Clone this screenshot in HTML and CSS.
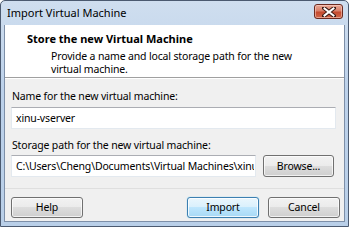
FILE: index.html
```html
<!DOCTYPE html>
<html>
<head>
<meta charset="utf-8">
<link rel="stylesheet" href="styles.css">
</head>
<body>
<div class="window">
  <div class="titlebar">
    <span class="title">Import Virtual Machine</span>
    <div class="close">
      <svg width="14" height="10" viewBox="0 0 14 10">
        <path d="M2 1 L12 9 M12 1 L2 9" stroke="#3a1a14" stroke-width="4" stroke-linecap="square"/>
        <path d="M2.5 1.5 L11.5 8.5 M11.5 1.5 L2.5 8.5" stroke="#ffffff" stroke-width="2" stroke-linecap="square"/>
      </svg>
    </div>
  </div>
  <div class="client">
    <div class="header">
      <div class="h-title">Store the new Virtual Machine</div>
      <div class="h-desc">Provide a name and local storage path for the new<br>virtual machine.</div>
    </div>
    <div class="body">
      <div class="label first">Name for the new virtual machine:</div>
      <div class="input name">xinu-vserver</div>
      <div class="label second">Storage path for the new virtual machine:</div>
      <div class="row">
        <div class="input path"><span class="path-text">C:\Users\Cheng\Documents\Virtual Machines\xinu-vserver</span></div>
        <div class="btn browse">Browse...</div>
      </div>
    </div>
    <div class="footer">
      <div class="btn help">Help</div>
      <div class="spacer"></div>
      <div class="btn default">Import</div>
      <div class="btn cancel">Cancel</div>
    </div>
  </div>
</div>
</body>
</html>
```

FILE: styles.css
```css
html, body {
  margin: 0;
  padding: 0;
  width: 349px;
  height: 227px;
  overflow: hidden;
  background: #ffffff;
}
.window {
  box-sizing: border-box;
  width: 349px;
  height: 227px;
  border: 1px solid #4b5a70;
  border-radius: 5px 5px 0 0;
  background: linear-gradient(to bottom, #cfdeef 0%, #bcd1ea 40%, #b9cfe8 100%);
  display: flex;
  flex-direction: column;
  font-family: "Noto Sans", "Open Sans", sans-serif;
  font-size: 10.5px;
  letter-spacing: -0.15px;
  color: #000;
}
.titlebar {
  height: 24px;
  display: flex;
  align-items: center;
  position: relative;
  padding-left: 6px;
}
.title {
  font-size: 11px;
  letter-spacing: 0;
  color: #000;
  line-height: 16px;
  margin-top: -1px;
}
.close {
  position: absolute;
  right: 5px;
  top: 3px;
  width: 29px;
  height: 15px;
  box-sizing: border-box;
  border: 1px solid #6c2a20;
  border-radius: 3px;
  background: linear-gradient(to bottom, #e9a896 0%, #d9806a 45%, #c54a2f 55%, #d0674a 100%);
  box-shadow: inset 0 0 0 1px rgba(255, 220, 210, 0.5);
  display: flex;
  align-items: center;
  justify-content: center;
}
.client {
  flex: 1;
  margin: 0 3px 4px 3px;
  border: 1px solid #7d8fa8;
  border-top: none;
  background: #f0f0f0;
  display: flex;
  flex-direction: column;
}
.header {
  background: #ffffff;
  height: 53px;
  box-sizing: border-box;
  padding: 6px 0 0 22px;
  border-bottom: 1px solid #a0a0a0;
  box-shadow: 0 1px 0 #ffffff;
}
.h-title {
  font-weight: bold;
  font-size: 11px;
  letter-spacing: 0;
  line-height: 16px;
}
.h-desc {
  margin-top: 3px;
  padding-left: 24px;
  line-height: 13px;
}
.body {
  padding: 10px 8px 0 6px;
  display: flex;
  flex-direction: column;
}
.label {
  line-height: 16px;
  padding-left: 1px;
}
.first { margin-bottom: 3px; }
.second { margin-top: 8px; margin-bottom: 2px; }
.input {
  box-sizing: border-box;
  height: 22px;
  background: #ffffff;
  border: 1px solid #e3e9ef;
  border-top-color: #abadb3;
  padding: 0 0 0 4px;
  line-height: 20px;
  white-space: nowrap;
  overflow: hidden;
}
.row {
  display: flex;
  gap: 7px;
}
.path {
  width: 245px;
  flex: none;
}
.path-text {
  display: block;
  width: 238px;
  overflow: hidden;
}
.btn {
  box-sizing: border-box;
  width: 72px;
  height: 22px;
  border: 1px solid #707070;
  border-radius: 3px;
  background: linear-gradient(to bottom, #f2f2f2 0%, #ebebeb 49%, #dddddd 50%, #cfcfcf 100%);
  box-shadow: inset 0 0 0 1px rgba(255,255,255,0.7);
  text-align: center;
  line-height: 20px;
  flex: none;
}
.browse { width: 71px; }
.footer {
  margin-top: 11px;
  border-top: 1px solid #dfdfdf;
  padding: 8px 4px 0 6px;
  display: flex;
  gap: 9px;
}
.spacer { flex: 1; }
.help { height: 21px; line-height: 19px; }
.default, .cancel { height: 21px; line-height: 19px; }
.default {
  border-color: #3c7fb1;
  background: linear-gradient(to bottom, #eaf6fd 0%, #d9f0fc 49%, #bee6fd 50%, #a7d9f5 100%);
  box-shadow: inset 0 0 0 1px rgba(255,255,255,0.8), 0 0 1px #48c4f5;
}
```
